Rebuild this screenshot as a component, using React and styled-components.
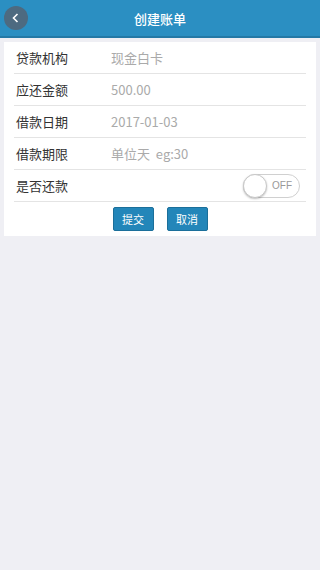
import { styled, createGlobalStyle } from "styled-components";

const GlobalStyle = createGlobalStyle`
  html, body {
    margin: 0;
    padding: 0;
    background: #efeff4;
    font-family: "Noto Sans CJK SC", "Liberation Sans", sans-serif;
  }
`;

const Page = styled.div`
  width: 320px;
  min-height: 570px;
  background: #efeff4;
`;

const Header = styled.div`
  height: 36px;
  background: #2b8fc2;
  border-bottom: 2px solid #2479a6;
  display: flex;
  align-items: center;
  justify-content: center;
  position: relative;
`;

const Title = styled.h1`
  margin: 0;
  color: #fff;
  font-size: 13px;
  font-weight: 500;
`;

const BackButton = styled.button`
  position: absolute;
  left: 4px;
  top: 6px;
  width: 24px;
  height: 24px;
  border-radius: 50%;
  border: none;
  padding: 0;
  background: #4d6a80;
  display: flex;
  align-items: center;
  justify-content: center;
`;

const Card = styled.div`
  margin: 4px 4px 0;
  background: #fff;
  padding: 0 10px 5px 10px;
`;

const Row = styled.div`
  height: 31px;
  display: flex;
  align-items: center;
  border-bottom: 1px solid #e4e4e4;
  padding: 0 2px;
`;

const Label = styled.span`
  width: 95px;
  font-size: 13px;
  color: #333;
`;

const Value = styled.span`
  flex: 1;
  font-size: 13px;
  color: #aaa;
  white-space: pre;
`;

const Toggle = styled.div`
  margin-left: auto;
  margin-right: 4px;
  width: 57px;
  height: 24px;
  border: 1px solid #d0d0d0;
  border-radius: 12px;
  display: flex;
  align-items: center;
  box-sizing: border-box;
`;

const Knob = styled.div`
  width: 24px;
  height: 24px;
  border-radius: 50%;
  background: #fff;
  border: 1px solid #c8c8c8;
  box-shadow: 0 1px 2px rgba(0, 0, 0, 0.25);
  box-sizing: border-box;
  margin-left: -1px;
`;

const ToggleText = styled.span`
  font-family: "Liberation Sans", sans-serif;
  font-size: 10px;
  color: #999;
  margin-left: 5px;
`;

const Actions = styled.div`
  display: flex;
  justify-content: center;
  gap: 13px;
  padding-top: 5px;
`;

const ActionButton = styled.button`
  width: 41px;
  height: 24px;
  background: #2386b9;
  border: 1px solid #1b6f9a;
  border-radius: 2px;
  color: #fff;
  font-family: "Noto Sans CJK SC", sans-serif;
  font-size: 11px;
  padding: 0;
`;

const rows = [
  ["贷款机构", "现金白卡"],
  ["应还金额", "500.00"],
  ["借款日期", "2017-01-03"],
  ["借款期限", "单位天  eg:30"],
];

const App = () => {
  return (
    <Page>
      <GlobalStyle />
      <Header>
        <BackButton>
          <svg width="12" height="12" viewBox="0 0 12 12">
            <path d="M7.5 2 L3.5 6 L7.5 10" fill="none" stroke="#fff" strokeWidth="1.6" />
          </svg>
        </BackButton>
        <Title>创建账单</Title>
      </Header>
      <Card>
        {rows.map(([l, v]) => (
          <Row key={l}>
            <Label>{l}</Label>
            <Value>{v}</Value>
          </Row>
        ))}
        <Row>
          <Label>是否还款</Label>
          <Toggle>
            <Knob />
            <ToggleText>OFF</ToggleText>
          </Toggle>
        </Row>
        <Actions>
          <ActionButton>提交</ActionButton>
          <ActionButton>取消</ActionButton>
        </Actions>
      </Card>
    </Page>
  );
};

export default App;
